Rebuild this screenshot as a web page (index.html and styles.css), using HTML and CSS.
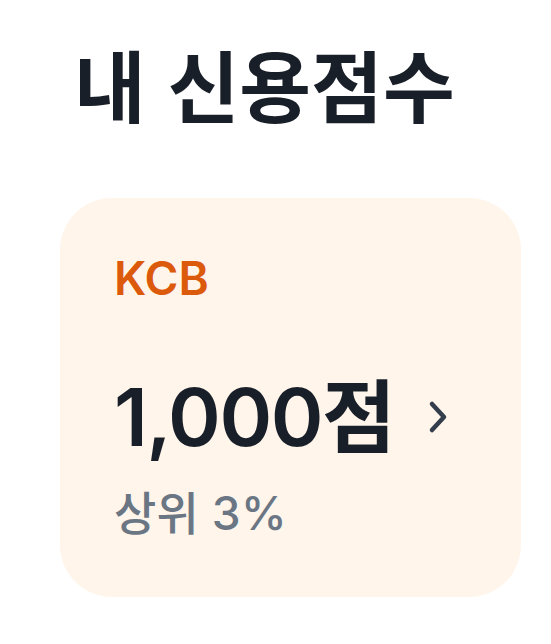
FILE: index.html
```html
<!DOCTYPE html>
<html lang="ko">
<head>
<meta charset="utf-8">
<link rel="stylesheet" href="styles.css">
</head>
<body>
<main class="page">
  <h1 class="title">내 신용점수</h1>
  <section class="card">
    <div class="agency">KCB</div>
    <div class="score-row">
      <span class="score">1,000점</span>
      <svg class="chevron" viewBox="0 0 20 34" width="20" height="34" aria-hidden="true">
        <path d="M4 4 L16 17 L4 30" fill="none" stroke="#333d4b" stroke-width="4.5" stroke-linecap="round" stroke-linejoin="round"/>
      </svg>
    </div>
    <div class="rank">상위 3%</div>
  </section>
</main>
</body>
</html>
```

FILE: styles.css
```css
html, body {
  margin: 0;
  padding: 0;
  background: #ffffff;
}
body {
  font-family: Inter, "Noto Sans CJK KR", sans-serif;
  color: #191f28;
}
.page {
  padding: 28px 0 0 60px;
  width: 461px;
}
.title {
  margin: 0 0 0 14px;
  font-family: "Noto Sans CJK KR", sans-serif;
  font-size: 78px;
  font-weight: 700;
  line-height: 110px;
  letter-spacing: 0;
  color: #191f28;
}
.card {
  margin-top: 60px;
  height: 399px;
  box-sizing: border-box;
  padding: 50px 0 0 54px;
  background: #fff5eb;
  border-radius: 52px;
}
.agency {
  font-size: 46px;
  font-weight: 600;
  line-height: 60px;
  color: #dc5a0c;
  letter-spacing: 0;
}
.score-row {
  display: flex;
  align-items: center;
  gap: 34px;
  margin-top: 69px;
  height: 80px;
}
.score {
  font-size: 80px;
  font-weight: 600;
  line-height: 80px;
  letter-spacing: -1.5px;
}
.chevron {
  margin-top: 0;
}
.rank {
  margin-top: 26px;
  font-size: 46px;
  font-weight: 500;
  line-height: 60px;
  color: #6b7684;
  letter-spacing: 0.3px;
}
```
